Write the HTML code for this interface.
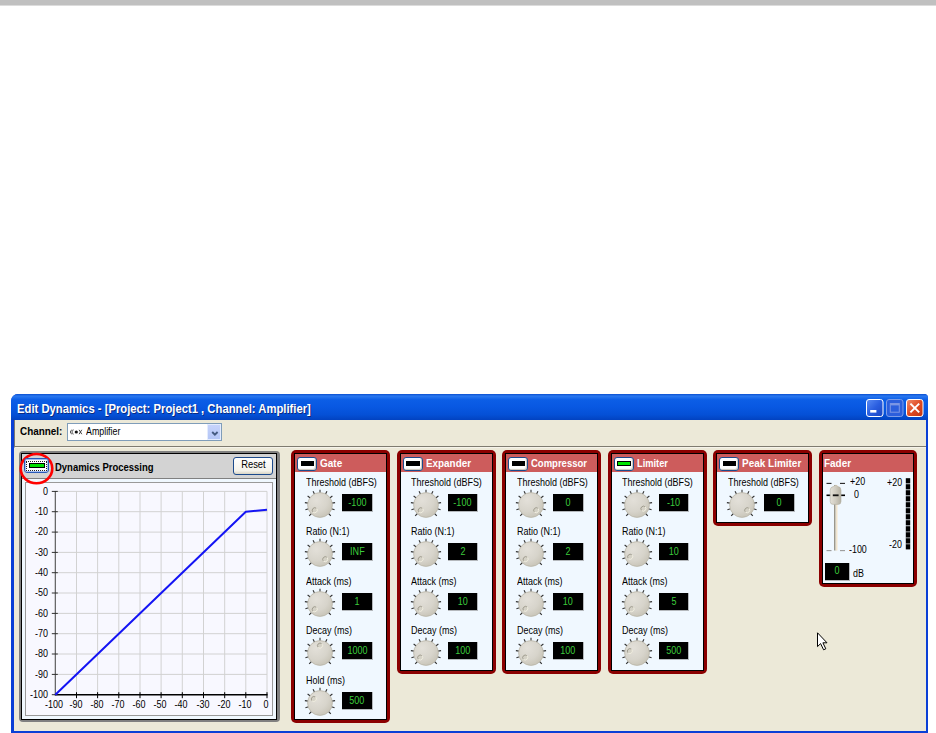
<!DOCTYPE html>
<html><head><meta charset="utf-8"><title>Edit Dynamics</title>
<style>
html,body{margin:0;padding:0;background:#fff;}
body{width:936px;height:733px;position:relative;overflow:hidden;font-family:"Liberation Sans",sans-serif;font-size:9.6px;color:#000;}
div,svg,span,i,b{position:absolute;box-sizing:border-box;}
.topbar{left:0;top:0;width:936px;height:6px;background:#c0c0c0;border-bottom:1px solid #dcdcdc}
.win{left:11px;top:394px;width:917px;height:340px;background:#0a3fd6;border-radius:7px 4px 0 0;}
.tb{left:0;top:0;width:917px;height:26px;border-radius:7px 4px 0 0;background:linear-gradient(#0a4fd0 0%,#2a78f0 8%,#0c5ee6 22%,#0858e2 50%,#0450d6 80%,#0242c0 100%);}
.tt{left:5.6px;top:8.6px;color:#fff;font-weight:bold;font-size:12px;line-height:13px;white-space:nowrap;transform:scaleX(0.939);transform-origin:0 0;text-shadow:1px 1px 0 #0a2a80}
.cl{left:3px;top:26px;width:912px;height:311px;background:#ece9d8;}
.tool{left:0;top:0;width:912px;height:28px;border-bottom:1px solid #f5f3ea;border-left:1px solid #777}
.tool u{position:absolute;left:0;right:0;bottom:0;height:1px;background:#7e7b70}
.chl{left:4.5px;top:4.5px;font-weight:bold;white-space:nowrap;font-size:11.2px;line-height:12px;transform:scaleX(0.886);transform-origin:0 0}
.cb{left:52px;top:3px;width:154.6px;height:17.5px;background:#fff;border:1px solid #7f9db9}
.cbb{right:0;top:0;width:13.5px;height:15.5px;background:linear-gradient(#c6d3fb,#b4c6f6);border:1px solid #e4ecfe}
.cbt{left:18px;top:1.5px;white-space:nowrap;font-size:10.3px;transform:scaleX(0.859);transform-origin:0 0;line-height:12px}
.lb{white-space:nowrap;font-size:10.3px;line-height:12px;transform:scaleX(0.872);transform-origin:0 0}
.vb{width:30.6px;height:18px;background:#000;color:#3ccc3c;text-align:center;font-size:10.4px;line-height:17px;border-right:1px solid #b4b8bc;border-bottom:1px solid #b4b8bc}
.vb span{position:static;display:inline-block;transform:scaleX(0.87);transform-origin:50% 50%}
.pn{background:#8b0000;border-radius:5px;}
.pi{left:3px;top:2.8px;right:3px;bottom:3px;background:#f0f8ff;border:1px solid #000}
.ph{left:0;top:0;right:0;height:18.3px;background:#cd5c5c}
.pt{color:#fff;font-weight:bold;white-space:nowrap;font-size:10.3px;line-height:12px;transform:scaleX(0.955);transform-origin:0 0}
.led{width:20px;height:13.5px;background:#fff;border:1px solid #1c4a8c;border-radius:3px;box-shadow:inset -1px -1px 1px #c8c4b8}
.led i{left:2.5px;top:2.8px;width:13.7px;height:5.6px;border:0.7px solid #000}
.led.big{width:25.7px;height:15px;border-color:#2858b8;box-shadow:inset 0 0 0 1px #a8c0f0}
.led.big b{left:1.5px;top:1.5px;right:1.5px;bottom:1.5px;border:1px dotted #222}
.led.big i{left:3.8px;top:4.2px;width:16.6px;height:5px}
.kn,.plot,.ring{overflow:visible}
.dp{left:19px;top:450.7px;width:260.6px;height:271.8px;background:#808080;border-radius:4px}
.dpi{left:1.8px;top:2.3px;right:2.8px;bottom:2.7px;border:1px solid #000;background:#f0f8ff}
.dph{left:0;top:0;right:0;height:25px;background:#d3d3d3;border-bottom:1px solid #808080}
.dpc{left:3.7px;top:28px;right:2.6px;bottom:2.7px;border:1px solid #9a9a9a;background:#f8f8ff}
.dpt{font-weight:bold;font-size:10.5px;line-height:12px;transform:scaleX(0.903);transform-origin:0 0;white-space:nowrap}
.btn{width:40px;height:17.5px;border:1px solid #1c4a8c;border-radius:3px;background:linear-gradient(#fff,#f4f2ea 80%,#d8d4c4);text-align:center;line-height:14.5px;font-size:10.3px}
.btn span{position:static;display:inline-block;transform:scaleX(0.91);transform-origin:50% 50%;margin-left:1.4px}
.ax{font-size:10.3px;line-height:12px;white-space:nowrap}
.yl{text-align:right;transform:scaleX(0.87);transform-origin:100% 50%}
.xl{text-align:center;transform:scaleX(0.87);transform-origin:50% 50%}
.fl{font-size:10px;line-height:12px;white-space:nowrap;transform:scaleX(0.89);transform-origin:0 0}
</style></head><body>
<svg width="0" height="0" style="left:0;top:0"><defs>
<radialGradient id="kg" cx="0.35" cy="0.3" r="0.85"><stop offset="0" stop-color="#e3e0d9"/><stop offset="0.55" stop-color="#d7d4cb"/><stop offset="1" stop-color="#c2beb0"/></radialGradient>
<radialGradient id="dg" cx="0.7" cy="0.7" r="0.8"><stop offset="0" stop-color="#e8e6de"/><stop offset="1" stop-color="#c4c0b4"/></radialGradient>
<linearGradient id="tg" x1="0" y1="0" x2="1" y2="0"><stop offset="0" stop-color="#e4e1d8"/><stop offset="0.5" stop-color="#d0ccc0"/><stop offset="1" stop-color="#b4b0a2"/></linearGradient>
</defs></svg>
<div class="topbar"></div>
<div class="win">
<div class="tb"><div class="tt">Edit Dynamics - [Project: Project1 , Channel: Amplifier]</div>
<svg class="plot" style="left:855px;top:5px" width="60" height="18" viewBox="0 0 60 18">
<defs><linearGradient id="bb" x1="0" y1="0" x2="1" y2="1"><stop offset="0" stop-color="#5a8cf4"/><stop offset="0.5" stop-color="#2a5ee0"/><stop offset="1" stop-color="#1a44c0"/></linearGradient>
<linearGradient id="br" x1="0" y1="0" x2="1" y2="1"><stop offset="0" stop-color="#f09070"/><stop offset="0.5" stop-color="#e04c24"/><stop offset="1" stop-color="#c03410"/></linearGradient></defs>
<rect x="0.5" y="0.5" width="16.5" height="17" rx="2.5" fill="url(#bb)" stroke="#fff" stroke-width="1"/>
<rect x="4.2" y="11" width="6.2" height="2.6" fill="#fff"/>
<rect x="20.5" y="0.5" width="16.5" height="17" rx="2.5" fill="#2c5edc" stroke="#7c9ce8" stroke-width="1"/>
<rect x="24.3" y="4.6" width="9" height="8.6" fill="none" stroke="#7c96e4" stroke-width="1"/><rect x="24.3" y="4.2" width="9" height="2.2" fill="#7c96e4"/>
<rect x="40.5" y="0.5" width="16.5" height="17" rx="2.5" fill="url(#br)" stroke="#fff" stroke-width="1"/>
<path d="M44.4 4.6 L53.2 13.4 M53.2 4.6 L44.4 13.4" stroke="#fff" stroke-width="2" fill="none"/>
</svg>
</div>
<div class="cl"><div class="tool"><u></u><div class="chl">Channel:</div><div class="cb"><svg class="plot" style="left:1.6px;top:4px" width="14" height="8" viewBox="0 0 14 8"><circle cx="6.3" cy="4" r="1.6" fill="#111"/><path d="M3.4 1.6 L1.8 4 L3.4 6.4 M1.8 1.6 L0.2 4 L1.8 6.4" stroke="#444" stroke-width="0.9" fill="none"/><path d="M9.1 1.8 L11.8 6.2 M11.8 1.8 L9.1 6.2" stroke="#333" stroke-width="0.9" fill="none"/></svg><div class="cbt">Amplifier</div><div class="cbb"><svg class="plot" style="left:2.6px;top:5.8px" width="8" height="6" viewBox="0 0 8 6"><path d="M1.2 1 L3.9 3.6 L6.6 1" stroke="#445a80" stroke-width="1.9" fill="none"/></svg></div></div></div></div>
</div>
<div class="dp"><div class="dpi"><div class="dph"></div><div class="dpc"><div class="dpp"></div></div></div></div><svg class="ring" style="left:17px;top:450.5px" width="40" height="36"><ellipse cx="19.5" cy="17.6" rx="15.8" ry="14.6" fill="none" stroke="#f00" stroke-width="2.6"/></svg><div class="led big" style="left:23.8px;top:458.1px"><b></b><i style="background:#00e000"></i></div><div class="dpt" style="left:55px;top:460.5px">Dynamics Processing</div><div class="btn" style="left:233px;top:457px"><span>Reset</span></div><svg class="plot" style="left:0;top:0" width="936" height="733"><line x1="76.5" y1="491.4" x2="76.5" y2="694.7" stroke="#d2d2d2" stroke-width="1"/><line x1="97.6" y1="491.4" x2="97.6" y2="694.7" stroke="#d2d2d2" stroke-width="1"/><line x1="118.8" y1="491.4" x2="118.8" y2="694.7" stroke="#d2d2d2" stroke-width="1"/><line x1="140.0" y1="491.4" x2="140.0" y2="694.7" stroke="#d2d2d2" stroke-width="1"/><line x1="161.1" y1="491.4" x2="161.1" y2="694.7" stroke="#d2d2d2" stroke-width="1"/><line x1="182.3" y1="491.4" x2="182.3" y2="694.7" stroke="#d2d2d2" stroke-width="1"/><line x1="203.5" y1="491.4" x2="203.5" y2="694.7" stroke="#d2d2d2" stroke-width="1"/><line x1="224.7" y1="491.4" x2="224.7" y2="694.7" stroke="#d2d2d2" stroke-width="1"/><line x1="245.8" y1="491.4" x2="245.8" y2="694.7" stroke="#d2d2d2" stroke-width="1"/><line x1="267.0" y1="491.4" x2="267.0" y2="694.7" stroke="#d2d2d2" stroke-width="1"/><line x1="55.3" y1="491.4" x2="267.0" y2="491.4" stroke="#d2d2d2" stroke-width="1"/><line x1="55.3" y1="511.7" x2="267.0" y2="511.7" stroke="#d2d2d2" stroke-width="1"/><line x1="55.3" y1="532.1" x2="267.0" y2="532.1" stroke="#d2d2d2" stroke-width="1"/><line x1="55.3" y1="552.4" x2="267.0" y2="552.4" stroke="#d2d2d2" stroke-width="1"/><line x1="55.3" y1="572.7" x2="267.0" y2="572.7" stroke="#d2d2d2" stroke-width="1"/><line x1="55.3" y1="593.0" x2="267.0" y2="593.0" stroke="#d2d2d2" stroke-width="1"/><line x1="55.3" y1="613.4" x2="267.0" y2="613.4" stroke="#d2d2d2" stroke-width="1"/><line x1="55.3" y1="633.7" x2="267.0" y2="633.7" stroke="#d2d2d2" stroke-width="1"/><line x1="55.3" y1="654.0" x2="267.0" y2="654.0" stroke="#d2d2d2" stroke-width="1"/><line x1="55.3" y1="674.4" x2="267.0" y2="674.4" stroke="#d2d2d2" stroke-width="1"/><line x1="55.3" y1="490.9" x2="55.3" y2="695.2" stroke="#505050" stroke-width="1.1"/><line x1="54.8" y1="694.7" x2="267.5" y2="694.7" stroke="#000" stroke-width="1.4"/><line x1="51.8" y1="491.4" x2="57.8" y2="491.4" stroke="#303030" stroke-width="1"/><line x1="51.8" y1="511.7" x2="57.8" y2="511.7" stroke="#303030" stroke-width="1"/><line x1="51.8" y1="532.1" x2="57.8" y2="532.1" stroke="#303030" stroke-width="1"/><line x1="51.8" y1="552.4" x2="57.8" y2="552.4" stroke="#303030" stroke-width="1"/><line x1="51.8" y1="572.7" x2="57.8" y2="572.7" stroke="#303030" stroke-width="1"/><line x1="51.8" y1="593.0" x2="57.8" y2="593.0" stroke="#303030" stroke-width="1"/><line x1="51.8" y1="613.4" x2="57.8" y2="613.4" stroke="#303030" stroke-width="1"/><line x1="51.8" y1="633.7" x2="57.8" y2="633.7" stroke="#303030" stroke-width="1"/><line x1="51.8" y1="654.0" x2="57.8" y2="654.0" stroke="#303030" stroke-width="1"/><line x1="51.8" y1="674.4" x2="57.8" y2="674.4" stroke="#303030" stroke-width="1"/><line x1="51.8" y1="694.7" x2="57.8" y2="694.7" stroke="#303030" stroke-width="1"/><line x1="76.5" y1="692.2" x2="76.5" y2="698.2" stroke="#000" stroke-width="1"/><line x1="97.6" y1="692.2" x2="97.6" y2="698.2" stroke="#000" stroke-width="1"/><line x1="118.8" y1="692.2" x2="118.8" y2="698.2" stroke="#000" stroke-width="1"/><line x1="140.0" y1="692.2" x2="140.0" y2="698.2" stroke="#000" stroke-width="1"/><line x1="161.1" y1="692.2" x2="161.1" y2="698.2" stroke="#000" stroke-width="1"/><line x1="182.3" y1="692.2" x2="182.3" y2="698.2" stroke="#000" stroke-width="1"/><line x1="203.5" y1="692.2" x2="203.5" y2="698.2" stroke="#000" stroke-width="1"/><line x1="224.7" y1="692.2" x2="224.7" y2="698.2" stroke="#000" stroke-width="1"/><line x1="245.8" y1="692.2" x2="245.8" y2="698.2" stroke="#000" stroke-width="1"/><line x1="267.0" y1="692.2" x2="267.0" y2="698.2" stroke="#000" stroke-width="1"/><polyline points="55.3,694.7 245.8,511.7 267.0,509.7" fill="none" stroke="#1414f4" stroke-width="2" stroke-linejoin="round"/></svg><div class="ax yl" style="left:18px;top:485.6px;width:30px">0</div><div class="ax yl" style="left:18px;top:505.9px;width:30px">-10</div><div class="ax yl" style="left:18px;top:526.3px;width:30px">-20</div><div class="ax yl" style="left:18px;top:546.6px;width:30px">-30</div><div class="ax yl" style="left:18px;top:566.9px;width:30px">-40</div><div class="ax yl" style="left:18px;top:587.2px;width:30px">-50</div><div class="ax yl" style="left:18px;top:607.6px;width:30px">-60</div><div class="ax yl" style="left:18px;top:627.9px;width:30px">-70</div><div class="ax yl" style="left:18px;top:648.2px;width:30px">-80</div><div class="ax yl" style="left:18px;top:668.6px;width:30px">-90</div><div class="ax yl" style="left:18px;top:688.9px;width:30px">-100</div><div class="ax xl" style="left:39.3px;top:698.9px;width:30px">-100</div><div class="ax xl" style="left:60.5px;top:698.9px;width:30px">-90</div><div class="ax xl" style="left:81.6px;top:698.9px;width:30px">-80</div><div class="ax xl" style="left:102.8px;top:698.9px;width:30px">-70</div><div class="ax xl" style="left:124.0px;top:698.9px;width:30px">-60</div><div class="ax xl" style="left:145.1px;top:698.9px;width:30px">-50</div><div class="ax xl" style="left:166.3px;top:698.9px;width:30px">-40</div><div class="ax xl" style="left:187.5px;top:698.9px;width:30px">-30</div><div class="ax xl" style="left:208.7px;top:698.9px;width:30px">-20</div><div class="ax xl" style="left:229.8px;top:698.9px;width:30px">-10</div><div class="ax xl" style="left:251.0px;top:698.9px;width:30px">0</div><div class="pn" style="left:291.0px;top:450.4px;width:99.2px;height:272.9px"><div class="pi"><div class="ph"></div></div></div><div class="led" style="left:297.0px;top:457.0px"><i style="background:#000"></i></div><div class="pt" style="left:320.2px;top:457.5px;transform:scaleX(0.969)">Gate</div><div class="lb" style="left:305.7px;top:476.7px">Threshold (dBFS)</div><svg class="kn" style="left:302.3px;top:486.5px" width="36" height="36" viewBox="-18 -18 36 36"><line x1="-8.49" y1="8.49" x2="-10.82" y2="10.82" stroke="#333" stroke-width="1.1"/><line x1="-11.41" y1="3.71" x2="-14.55" y2="4.73" stroke="#333" stroke-width="1.1"/><line x1="-11.85" y1="-1.88" x2="-15.11" y2="-2.39" stroke="#333" stroke-width="1.1"/><line x1="-9.71" y1="-7.05" x2="-12.38" y2="-8.99" stroke="#333" stroke-width="1.1"/><line x1="-5.45" y1="-10.69" x2="-6.95" y2="-13.63" stroke="#333" stroke-width="1.1"/><line x1="0.00" y1="-12.00" x2="0.00" y2="-15.30" stroke="#333" stroke-width="1.1"/><line x1="5.45" y1="-10.69" x2="6.95" y2="-13.63" stroke="#333" stroke-width="1.1"/><line x1="9.71" y1="-7.05" x2="12.38" y2="-8.99" stroke="#333" stroke-width="1.1"/><line x1="11.85" y1="-1.88" x2="15.11" y2="-2.39" stroke="#333" stroke-width="1.1"/><line x1="11.41" y1="3.71" x2="14.55" y2="4.73" stroke="#333" stroke-width="1.1"/><line x1="8.49" y1="8.49" x2="10.82" y2="10.82" stroke="#333" stroke-width="1.1"/><circle r="12.4" fill="url(#kg)" stroke="#b4b0a2" stroke-width="0.7"/><circle cx="-5.23" cy="5.23" r="2.5" fill="#d4d1c6"/><path d="M-7.00 7.00 A2.5 2.5 0 0 1 -3.46 3.46" fill="none" stroke="#9a9688" stroke-width="0.9"/><path d="M-3.46 3.46 A2.5 2.5 0 0 1 -7.00 7.00" fill="none" stroke="#f3f0e2" stroke-width="0.9"/></svg><div class="vb" style="left:342.3px;top:493.6px"><span>-100</span></div><div class="lb" style="left:305.7px;top:526.2px">Ratio (N:1)</div><svg class="kn" style="left:302.3px;top:536.0px" width="36" height="36" viewBox="-18 -18 36 36"><line x1="-8.49" y1="8.49" x2="-10.82" y2="10.82" stroke="#333" stroke-width="1.1"/><line x1="-11.41" y1="3.71" x2="-14.55" y2="4.73" stroke="#333" stroke-width="1.1"/><line x1="-11.85" y1="-1.88" x2="-15.11" y2="-2.39" stroke="#333" stroke-width="1.1"/><line x1="-9.71" y1="-7.05" x2="-12.38" y2="-8.99" stroke="#333" stroke-width="1.1"/><line x1="-5.45" y1="-10.69" x2="-6.95" y2="-13.63" stroke="#333" stroke-width="1.1"/><line x1="0.00" y1="-12.00" x2="0.00" y2="-15.30" stroke="#333" stroke-width="1.1"/><line x1="5.45" y1="-10.69" x2="6.95" y2="-13.63" stroke="#333" stroke-width="1.1"/><line x1="9.71" y1="-7.05" x2="12.38" y2="-8.99" stroke="#333" stroke-width="1.1"/><line x1="11.85" y1="-1.88" x2="15.11" y2="-2.39" stroke="#333" stroke-width="1.1"/><line x1="11.41" y1="3.71" x2="14.55" y2="4.73" stroke="#333" stroke-width="1.1"/><line x1="8.49" y1="8.49" x2="10.82" y2="10.82" stroke="#333" stroke-width="1.1"/><circle r="12.4" fill="url(#kg)" stroke="#b4b0a2" stroke-width="0.7"/><circle cx="5.23" cy="5.23" r="2.5" fill="#d4d1c6"/><path d="M3.46 7.00 A2.5 2.5 0 0 1 7.00 3.46" fill="none" stroke="#9a9688" stroke-width="0.9"/><path d="M7.00 3.46 A2.5 2.5 0 0 1 3.46 7.00" fill="none" stroke="#f3f0e2" stroke-width="0.9"/></svg><div class="vb" style="left:342.3px;top:543.1px"><span>INF</span></div><div class="lb" style="left:305.7px;top:575.7px">Attack (ms)</div><svg class="kn" style="left:302.3px;top:585.5px" width="36" height="36" viewBox="-18 -18 36 36"><line x1="-8.49" y1="8.49" x2="-10.82" y2="10.82" stroke="#333" stroke-width="1.1"/><line x1="-11.41" y1="3.71" x2="-14.55" y2="4.73" stroke="#333" stroke-width="1.1"/><line x1="-11.85" y1="-1.88" x2="-15.11" y2="-2.39" stroke="#333" stroke-width="1.1"/><line x1="-9.71" y1="-7.05" x2="-12.38" y2="-8.99" stroke="#333" stroke-width="1.1"/><line x1="-5.45" y1="-10.69" x2="-6.95" y2="-13.63" stroke="#333" stroke-width="1.1"/><line x1="0.00" y1="-12.00" x2="0.00" y2="-15.30" stroke="#333" stroke-width="1.1"/><line x1="5.45" y1="-10.69" x2="6.95" y2="-13.63" stroke="#333" stroke-width="1.1"/><line x1="9.71" y1="-7.05" x2="12.38" y2="-8.99" stroke="#333" stroke-width="1.1"/><line x1="11.85" y1="-1.88" x2="15.11" y2="-2.39" stroke="#333" stroke-width="1.1"/><line x1="11.41" y1="3.71" x2="14.55" y2="4.73" stroke="#333" stroke-width="1.1"/><line x1="8.49" y1="8.49" x2="10.82" y2="10.82" stroke="#333" stroke-width="1.1"/><circle r="12.4" fill="url(#kg)" stroke="#b4b0a2" stroke-width="0.7"/><circle cx="-5.23" cy="5.23" r="2.5" fill="#d4d1c6"/><path d="M-7.00 7.00 A2.5 2.5 0 0 1 -3.46 3.46" fill="none" stroke="#9a9688" stroke-width="0.9"/><path d="M-3.46 3.46 A2.5 2.5 0 0 1 -7.00 7.00" fill="none" stroke="#f3f0e2" stroke-width="0.9"/></svg><div class="vb" style="left:342.3px;top:592.6px"><span>1</span></div><div class="lb" style="left:305.7px;top:625.2px">Decay (ms)</div><svg class="kn" style="left:302.3px;top:635.0px" width="36" height="36" viewBox="-18 -18 36 36"><line x1="-8.49" y1="8.49" x2="-10.82" y2="10.82" stroke="#333" stroke-width="1.1"/><line x1="-11.41" y1="3.71" x2="-14.55" y2="4.73" stroke="#333" stroke-width="1.1"/><line x1="-11.85" y1="-1.88" x2="-15.11" y2="-2.39" stroke="#333" stroke-width="1.1"/><line x1="-9.71" y1="-7.05" x2="-12.38" y2="-8.99" stroke="#333" stroke-width="1.1"/><line x1="-5.45" y1="-10.69" x2="-6.95" y2="-13.63" stroke="#333" stroke-width="1.1"/><line x1="0.00" y1="-12.00" x2="0.00" y2="-15.30" stroke="#333" stroke-width="1.1"/><line x1="5.45" y1="-10.69" x2="6.95" y2="-13.63" stroke="#333" stroke-width="1.1"/><line x1="9.71" y1="-7.05" x2="12.38" y2="-8.99" stroke="#333" stroke-width="1.1"/><line x1="11.85" y1="-1.88" x2="15.11" y2="-2.39" stroke="#333" stroke-width="1.1"/><line x1="11.41" y1="3.71" x2="14.55" y2="4.73" stroke="#333" stroke-width="1.1"/><line x1="8.49" y1="8.49" x2="10.82" y2="10.82" stroke="#333" stroke-width="1.1"/><circle r="12.4" fill="url(#kg)" stroke="#b4b0a2" stroke-width="0.7"/><circle cx="0.00" cy="-7.40" r="2.5" fill="#d4d1c6"/><path d="M-1.77 -5.63 A2.5 2.5 0 0 1 1.77 -9.17" fill="none" stroke="#9a9688" stroke-width="0.9"/><path d="M1.77 -9.17 A2.5 2.5 0 0 1 -1.77 -5.63" fill="none" stroke="#f3f0e2" stroke-width="0.9"/></svg><div class="vb" style="left:342.3px;top:642.1px"><span>1000</span></div><div class="lb" style="left:305.7px;top:674.7px">Hold (ms)</div><svg class="kn" style="left:302.3px;top:684.5px" width="36" height="36" viewBox="-18 -18 36 36"><line x1="-8.49" y1="8.49" x2="-10.82" y2="10.82" stroke="#333" stroke-width="1.1"/><line x1="-11.41" y1="3.71" x2="-14.55" y2="4.73" stroke="#333" stroke-width="1.1"/><line x1="-11.85" y1="-1.88" x2="-15.11" y2="-2.39" stroke="#333" stroke-width="1.1"/><line x1="-9.71" y1="-7.05" x2="-12.38" y2="-8.99" stroke="#333" stroke-width="1.1"/><line x1="-5.45" y1="-10.69" x2="-6.95" y2="-13.63" stroke="#333" stroke-width="1.1"/><line x1="0.00" y1="-12.00" x2="0.00" y2="-15.30" stroke="#333" stroke-width="1.1"/><line x1="5.45" y1="-10.69" x2="6.95" y2="-13.63" stroke="#333" stroke-width="1.1"/><line x1="9.71" y1="-7.05" x2="12.38" y2="-8.99" stroke="#333" stroke-width="1.1"/><line x1="11.85" y1="-1.88" x2="15.11" y2="-2.39" stroke="#333" stroke-width="1.1"/><line x1="11.41" y1="3.71" x2="14.55" y2="4.73" stroke="#333" stroke-width="1.1"/><line x1="8.49" y1="8.49" x2="10.82" y2="10.82" stroke="#333" stroke-width="1.1"/><circle r="12.4" fill="url(#kg)" stroke="#b4b0a2" stroke-width="0.7"/><circle cx="-6.21" cy="-4.03" r="2.5" fill="#d4d1c6"/><path d="M-7.97 -2.26 A2.5 2.5 0 0 1 -4.44 -5.80" fill="none" stroke="#9a9688" stroke-width="0.9"/><path d="M-4.44 -5.80 A2.5 2.5 0 0 1 -7.97 -2.26" fill="none" stroke="#f3f0e2" stroke-width="0.9"/></svg><div class="vb" style="left:342.3px;top:691.6px"><span>500</span></div><div class="pn" style="left:396.5px;top:450.4px;width:99.2px;height:223.8px"><div class="pi"><div class="ph"></div></div></div><div class="led" style="left:402.5px;top:457.0px"><i style="background:#000"></i></div><div class="pt" style="left:425.7px;top:457.5px;transform:scaleX(0.959)">Expander</div><div class="lb" style="left:411.2px;top:476.7px">Threshold (dBFS)</div><svg class="kn" style="left:407.8px;top:486.5px" width="36" height="36" viewBox="-18 -18 36 36"><line x1="-8.49" y1="8.49" x2="-10.82" y2="10.82" stroke="#333" stroke-width="1.1"/><line x1="-11.41" y1="3.71" x2="-14.55" y2="4.73" stroke="#333" stroke-width="1.1"/><line x1="-11.85" y1="-1.88" x2="-15.11" y2="-2.39" stroke="#333" stroke-width="1.1"/><line x1="-9.71" y1="-7.05" x2="-12.38" y2="-8.99" stroke="#333" stroke-width="1.1"/><line x1="-5.45" y1="-10.69" x2="-6.95" y2="-13.63" stroke="#333" stroke-width="1.1"/><line x1="0.00" y1="-12.00" x2="0.00" y2="-15.30" stroke="#333" stroke-width="1.1"/><line x1="5.45" y1="-10.69" x2="6.95" y2="-13.63" stroke="#333" stroke-width="1.1"/><line x1="9.71" y1="-7.05" x2="12.38" y2="-8.99" stroke="#333" stroke-width="1.1"/><line x1="11.85" y1="-1.88" x2="15.11" y2="-2.39" stroke="#333" stroke-width="1.1"/><line x1="11.41" y1="3.71" x2="14.55" y2="4.73" stroke="#333" stroke-width="1.1"/><line x1="8.49" y1="8.49" x2="10.82" y2="10.82" stroke="#333" stroke-width="1.1"/><circle r="12.4" fill="url(#kg)" stroke="#b4b0a2" stroke-width="0.7"/><circle cx="-5.23" cy="5.23" r="2.5" fill="#d4d1c6"/><path d="M-7.00 7.00 A2.5 2.5 0 0 1 -3.46 3.46" fill="none" stroke="#9a9688" stroke-width="0.9"/><path d="M-3.46 3.46 A2.5 2.5 0 0 1 -7.00 7.00" fill="none" stroke="#f3f0e2" stroke-width="0.9"/></svg><div class="vb" style="left:447.8px;top:493.6px"><span>-100</span></div><div class="lb" style="left:411.2px;top:526.2px">Ratio (N:1)</div><svg class="kn" style="left:407.8px;top:536.0px" width="36" height="36" viewBox="-18 -18 36 36"><line x1="-8.49" y1="8.49" x2="-10.82" y2="10.82" stroke="#333" stroke-width="1.1"/><line x1="-11.41" y1="3.71" x2="-14.55" y2="4.73" stroke="#333" stroke-width="1.1"/><line x1="-11.85" y1="-1.88" x2="-15.11" y2="-2.39" stroke="#333" stroke-width="1.1"/><line x1="-9.71" y1="-7.05" x2="-12.38" y2="-8.99" stroke="#333" stroke-width="1.1"/><line x1="-5.45" y1="-10.69" x2="-6.95" y2="-13.63" stroke="#333" stroke-width="1.1"/><line x1="0.00" y1="-12.00" x2="0.00" y2="-15.30" stroke="#333" stroke-width="1.1"/><line x1="5.45" y1="-10.69" x2="6.95" y2="-13.63" stroke="#333" stroke-width="1.1"/><line x1="9.71" y1="-7.05" x2="12.38" y2="-8.99" stroke="#333" stroke-width="1.1"/><line x1="11.85" y1="-1.88" x2="15.11" y2="-2.39" stroke="#333" stroke-width="1.1"/><line x1="11.41" y1="3.71" x2="14.55" y2="4.73" stroke="#333" stroke-width="1.1"/><line x1="8.49" y1="8.49" x2="10.82" y2="10.82" stroke="#333" stroke-width="1.1"/><circle r="12.4" fill="url(#kg)" stroke="#b4b0a2" stroke-width="0.7"/><circle cx="-5.32" cy="5.14" r="2.5" fill="#d4d1c6"/><path d="M-7.09 6.91 A2.5 2.5 0 0 1 -3.56 3.37" fill="none" stroke="#9a9688" stroke-width="0.9"/><path d="M-3.56 3.37 A2.5 2.5 0 0 1 -7.09 6.91" fill="none" stroke="#f3f0e2" stroke-width="0.9"/></svg><div class="vb" style="left:447.8px;top:543.1px"><span>2</span></div><div class="lb" style="left:411.2px;top:575.7px">Attack (ms)</div><svg class="kn" style="left:407.8px;top:585.5px" width="36" height="36" viewBox="-18 -18 36 36"><line x1="-8.49" y1="8.49" x2="-10.82" y2="10.82" stroke="#333" stroke-width="1.1"/><line x1="-11.41" y1="3.71" x2="-14.55" y2="4.73" stroke="#333" stroke-width="1.1"/><line x1="-11.85" y1="-1.88" x2="-15.11" y2="-2.39" stroke="#333" stroke-width="1.1"/><line x1="-9.71" y1="-7.05" x2="-12.38" y2="-8.99" stroke="#333" stroke-width="1.1"/><line x1="-5.45" y1="-10.69" x2="-6.95" y2="-13.63" stroke="#333" stroke-width="1.1"/><line x1="0.00" y1="-12.00" x2="0.00" y2="-15.30" stroke="#333" stroke-width="1.1"/><line x1="5.45" y1="-10.69" x2="6.95" y2="-13.63" stroke="#333" stroke-width="1.1"/><line x1="9.71" y1="-7.05" x2="12.38" y2="-8.99" stroke="#333" stroke-width="1.1"/><line x1="11.85" y1="-1.88" x2="15.11" y2="-2.39" stroke="#333" stroke-width="1.1"/><line x1="11.41" y1="3.71" x2="14.55" y2="4.73" stroke="#333" stroke-width="1.1"/><line x1="8.49" y1="8.49" x2="10.82" y2="10.82" stroke="#333" stroke-width="1.1"/><circle r="12.4" fill="url(#kg)" stroke="#b4b0a2" stroke-width="0.7"/><circle cx="-5.58" cy="4.85" r="2.5" fill="#d4d1c6"/><path d="M-7.35 6.62 A2.5 2.5 0 0 1 -3.82 3.09" fill="none" stroke="#9a9688" stroke-width="0.9"/><path d="M-3.82 3.09 A2.5 2.5 0 0 1 -7.35 6.62" fill="none" stroke="#f3f0e2" stroke-width="0.9"/></svg><div class="vb" style="left:447.8px;top:592.6px"><span>10</span></div><div class="lb" style="left:411.2px;top:625.2px">Decay (ms)</div><svg class="kn" style="left:407.8px;top:635.0px" width="36" height="36" viewBox="-18 -18 36 36"><line x1="-8.49" y1="8.49" x2="-10.82" y2="10.82" stroke="#333" stroke-width="1.1"/><line x1="-11.41" y1="3.71" x2="-14.55" y2="4.73" stroke="#333" stroke-width="1.1"/><line x1="-11.85" y1="-1.88" x2="-15.11" y2="-2.39" stroke="#333" stroke-width="1.1"/><line x1="-9.71" y1="-7.05" x2="-12.38" y2="-8.99" stroke="#333" stroke-width="1.1"/><line x1="-5.45" y1="-10.69" x2="-6.95" y2="-13.63" stroke="#333" stroke-width="1.1"/><line x1="0.00" y1="-12.00" x2="0.00" y2="-15.30" stroke="#333" stroke-width="1.1"/><line x1="5.45" y1="-10.69" x2="6.95" y2="-13.63" stroke="#333" stroke-width="1.1"/><line x1="9.71" y1="-7.05" x2="12.38" y2="-8.99" stroke="#333" stroke-width="1.1"/><line x1="11.85" y1="-1.88" x2="15.11" y2="-2.39" stroke="#333" stroke-width="1.1"/><line x1="11.41" y1="3.71" x2="14.55" y2="4.73" stroke="#333" stroke-width="1.1"/><line x1="8.49" y1="8.49" x2="10.82" y2="10.82" stroke="#333" stroke-width="1.1"/><circle r="12.4" fill="url(#kg)" stroke="#b4b0a2" stroke-width="0.7"/><circle cx="-5.83" cy="4.56" r="2.5" fill="#d4d1c6"/><path d="M-7.60 6.32 A2.5 2.5 0 0 1 -4.06 2.79" fill="none" stroke="#9a9688" stroke-width="0.9"/><path d="M-4.06 2.79 A2.5 2.5 0 0 1 -7.60 6.32" fill="none" stroke="#f3f0e2" stroke-width="0.9"/></svg><div class="vb" style="left:447.8px;top:642.1px"><span>100</span></div><div class="pn" style="left:502.0px;top:450.4px;width:99.2px;height:223.8px"><div class="pi"><div class="ph"></div></div></div><div class="led" style="left:508.0px;top:457.0px"><i style="background:#000"></i></div><div class="pt" style="left:531.2px;top:457.5px;transform:scaleX(0.923)">Compressor</div><div class="lb" style="left:516.7px;top:476.7px">Threshold (dBFS)</div><svg class="kn" style="left:513.3px;top:486.5px" width="36" height="36" viewBox="-18 -18 36 36"><line x1="-8.49" y1="8.49" x2="-10.82" y2="10.82" stroke="#333" stroke-width="1.1"/><line x1="-11.41" y1="3.71" x2="-14.55" y2="4.73" stroke="#333" stroke-width="1.1"/><line x1="-11.85" y1="-1.88" x2="-15.11" y2="-2.39" stroke="#333" stroke-width="1.1"/><line x1="-9.71" y1="-7.05" x2="-12.38" y2="-8.99" stroke="#333" stroke-width="1.1"/><line x1="-5.45" y1="-10.69" x2="-6.95" y2="-13.63" stroke="#333" stroke-width="1.1"/><line x1="0.00" y1="-12.00" x2="0.00" y2="-15.30" stroke="#333" stroke-width="1.1"/><line x1="5.45" y1="-10.69" x2="6.95" y2="-13.63" stroke="#333" stroke-width="1.1"/><line x1="9.71" y1="-7.05" x2="12.38" y2="-8.99" stroke="#333" stroke-width="1.1"/><line x1="11.85" y1="-1.88" x2="15.11" y2="-2.39" stroke="#333" stroke-width="1.1"/><line x1="11.41" y1="3.71" x2="14.55" y2="4.73" stroke="#333" stroke-width="1.1"/><line x1="8.49" y1="8.49" x2="10.82" y2="10.82" stroke="#333" stroke-width="1.1"/><circle r="12.4" fill="url(#kg)" stroke="#b4b0a2" stroke-width="0.7"/><circle cx="5.23" cy="5.23" r="2.5" fill="#d4d1c6"/><path d="M3.46 7.00 A2.5 2.5 0 0 1 7.00 3.46" fill="none" stroke="#9a9688" stroke-width="0.9"/><path d="M7.00 3.46 A2.5 2.5 0 0 1 3.46 7.00" fill="none" stroke="#f3f0e2" stroke-width="0.9"/></svg><div class="vb" style="left:553.3px;top:493.6px"><span>0</span></div><div class="lb" style="left:516.7px;top:526.2px">Ratio (N:1)</div><svg class="kn" style="left:513.3px;top:536.0px" width="36" height="36" viewBox="-18 -18 36 36"><line x1="-8.49" y1="8.49" x2="-10.82" y2="10.82" stroke="#333" stroke-width="1.1"/><line x1="-11.41" y1="3.71" x2="-14.55" y2="4.73" stroke="#333" stroke-width="1.1"/><line x1="-11.85" y1="-1.88" x2="-15.11" y2="-2.39" stroke="#333" stroke-width="1.1"/><line x1="-9.71" y1="-7.05" x2="-12.38" y2="-8.99" stroke="#333" stroke-width="1.1"/><line x1="-5.45" y1="-10.69" x2="-6.95" y2="-13.63" stroke="#333" stroke-width="1.1"/><line x1="0.00" y1="-12.00" x2="0.00" y2="-15.30" stroke="#333" stroke-width="1.1"/><line x1="5.45" y1="-10.69" x2="6.95" y2="-13.63" stroke="#333" stroke-width="1.1"/><line x1="9.71" y1="-7.05" x2="12.38" y2="-8.99" stroke="#333" stroke-width="1.1"/><line x1="11.85" y1="-1.88" x2="15.11" y2="-2.39" stroke="#333" stroke-width="1.1"/><line x1="11.41" y1="3.71" x2="14.55" y2="4.73" stroke="#333" stroke-width="1.1"/><line x1="8.49" y1="8.49" x2="10.82" y2="10.82" stroke="#333" stroke-width="1.1"/><circle r="12.4" fill="url(#kg)" stroke="#b4b0a2" stroke-width="0.7"/><circle cx="-5.32" cy="5.14" r="2.5" fill="#d4d1c6"/><path d="M-7.09 6.91 A2.5 2.5 0 0 1 -3.56 3.37" fill="none" stroke="#9a9688" stroke-width="0.9"/><path d="M-3.56 3.37 A2.5 2.5 0 0 1 -7.09 6.91" fill="none" stroke="#f3f0e2" stroke-width="0.9"/></svg><div class="vb" style="left:553.3px;top:543.1px"><span>2</span></div><div class="lb" style="left:516.7px;top:575.7px">Attack (ms)</div><svg class="kn" style="left:513.3px;top:585.5px" width="36" height="36" viewBox="-18 -18 36 36"><line x1="-8.49" y1="8.49" x2="-10.82" y2="10.82" stroke="#333" stroke-width="1.1"/><line x1="-11.41" y1="3.71" x2="-14.55" y2="4.73" stroke="#333" stroke-width="1.1"/><line x1="-11.85" y1="-1.88" x2="-15.11" y2="-2.39" stroke="#333" stroke-width="1.1"/><line x1="-9.71" y1="-7.05" x2="-12.38" y2="-8.99" stroke="#333" stroke-width="1.1"/><line x1="-5.45" y1="-10.69" x2="-6.95" y2="-13.63" stroke="#333" stroke-width="1.1"/><line x1="0.00" y1="-12.00" x2="0.00" y2="-15.30" stroke="#333" stroke-width="1.1"/><line x1="5.45" y1="-10.69" x2="6.95" y2="-13.63" stroke="#333" stroke-width="1.1"/><line x1="9.71" y1="-7.05" x2="12.38" y2="-8.99" stroke="#333" stroke-width="1.1"/><line x1="11.85" y1="-1.88" x2="15.11" y2="-2.39" stroke="#333" stroke-width="1.1"/><line x1="11.41" y1="3.71" x2="14.55" y2="4.73" stroke="#333" stroke-width="1.1"/><line x1="8.49" y1="8.49" x2="10.82" y2="10.82" stroke="#333" stroke-width="1.1"/><circle r="12.4" fill="url(#kg)" stroke="#b4b0a2" stroke-width="0.7"/><circle cx="-5.58" cy="4.85" r="2.5" fill="#d4d1c6"/><path d="M-7.35 6.62 A2.5 2.5 0 0 1 -3.82 3.09" fill="none" stroke="#9a9688" stroke-width="0.9"/><path d="M-3.82 3.09 A2.5 2.5 0 0 1 -7.35 6.62" fill="none" stroke="#f3f0e2" stroke-width="0.9"/></svg><div class="vb" style="left:553.3px;top:592.6px"><span>10</span></div><div class="lb" style="left:516.7px;top:625.2px">Decay (ms)</div><svg class="kn" style="left:513.3px;top:635.0px" width="36" height="36" viewBox="-18 -18 36 36"><line x1="-8.49" y1="8.49" x2="-10.82" y2="10.82" stroke="#333" stroke-width="1.1"/><line x1="-11.41" y1="3.71" x2="-14.55" y2="4.73" stroke="#333" stroke-width="1.1"/><line x1="-11.85" y1="-1.88" x2="-15.11" y2="-2.39" stroke="#333" stroke-width="1.1"/><line x1="-9.71" y1="-7.05" x2="-12.38" y2="-8.99" stroke="#333" stroke-width="1.1"/><line x1="-5.45" y1="-10.69" x2="-6.95" y2="-13.63" stroke="#333" stroke-width="1.1"/><line x1="0.00" y1="-12.00" x2="0.00" y2="-15.30" stroke="#333" stroke-width="1.1"/><line x1="5.45" y1="-10.69" x2="6.95" y2="-13.63" stroke="#333" stroke-width="1.1"/><line x1="9.71" y1="-7.05" x2="12.38" y2="-8.99" stroke="#333" stroke-width="1.1"/><line x1="11.85" y1="-1.88" x2="15.11" y2="-2.39" stroke="#333" stroke-width="1.1"/><line x1="11.41" y1="3.71" x2="14.55" y2="4.73" stroke="#333" stroke-width="1.1"/><line x1="8.49" y1="8.49" x2="10.82" y2="10.82" stroke="#333" stroke-width="1.1"/><circle r="12.4" fill="url(#kg)" stroke="#b4b0a2" stroke-width="0.7"/><circle cx="-5.83" cy="4.56" r="2.5" fill="#d4d1c6"/><path d="M-7.60 6.32 A2.5 2.5 0 0 1 -4.06 2.79" fill="none" stroke="#9a9688" stroke-width="0.9"/><path d="M-4.06 2.79 A2.5 2.5 0 0 1 -7.60 6.32" fill="none" stroke="#f3f0e2" stroke-width="0.9"/></svg><div class="vb" style="left:553.3px;top:642.1px"><span>100</span></div><div class="pn" style="left:607.5px;top:450.4px;width:99.2px;height:223.8px"><div class="pi"><div class="ph"></div></div></div><div class="led" style="left:613.5px;top:457.0px"><i style="background:#00e400"></i></div><div class="pt" style="left:636.7px;top:457.5px;transform:scaleX(0.9)">Limiter</div><div class="lb" style="left:622.2px;top:476.7px">Threshold (dBFS)</div><svg class="kn" style="left:618.8px;top:486.5px" width="36" height="36" viewBox="-18 -18 36 36"><line x1="-8.49" y1="8.49" x2="-10.82" y2="10.82" stroke="#333" stroke-width="1.1"/><line x1="-11.41" y1="3.71" x2="-14.55" y2="4.73" stroke="#333" stroke-width="1.1"/><line x1="-11.85" y1="-1.88" x2="-15.11" y2="-2.39" stroke="#333" stroke-width="1.1"/><line x1="-9.71" y1="-7.05" x2="-12.38" y2="-8.99" stroke="#333" stroke-width="1.1"/><line x1="-5.45" y1="-10.69" x2="-6.95" y2="-13.63" stroke="#333" stroke-width="1.1"/><line x1="0.00" y1="-12.00" x2="0.00" y2="-15.30" stroke="#333" stroke-width="1.1"/><line x1="5.45" y1="-10.69" x2="6.95" y2="-13.63" stroke="#333" stroke-width="1.1"/><line x1="9.71" y1="-7.05" x2="12.38" y2="-8.99" stroke="#333" stroke-width="1.1"/><line x1="11.85" y1="-1.88" x2="15.11" y2="-2.39" stroke="#333" stroke-width="1.1"/><line x1="11.41" y1="3.71" x2="14.55" y2="4.73" stroke="#333" stroke-width="1.1"/><line x1="8.49" y1="8.49" x2="10.82" y2="10.82" stroke="#333" stroke-width="1.1"/><circle r="12.4" fill="url(#kg)" stroke="#b4b0a2" stroke-width="0.7"/><circle cx="6.41" cy="3.70" r="2.5" fill="#d4d1c6"/><path d="M4.64 5.47 A2.5 2.5 0 0 1 8.18 1.93" fill="none" stroke="#9a9688" stroke-width="0.9"/><path d="M8.18 1.93 A2.5 2.5 0 0 1 4.64 5.47" fill="none" stroke="#f3f0e2" stroke-width="0.9"/></svg><div class="vb" style="left:658.8px;top:493.6px"><span>-10</span></div><div class="lb" style="left:622.2px;top:526.2px">Ratio (N:1)</div><svg class="kn" style="left:618.8px;top:536.0px" width="36" height="36" viewBox="-18 -18 36 36"><line x1="-8.49" y1="8.49" x2="-10.82" y2="10.82" stroke="#333" stroke-width="1.1"/><line x1="-11.41" y1="3.71" x2="-14.55" y2="4.73" stroke="#333" stroke-width="1.1"/><line x1="-11.85" y1="-1.88" x2="-15.11" y2="-2.39" stroke="#333" stroke-width="1.1"/><line x1="-9.71" y1="-7.05" x2="-12.38" y2="-8.99" stroke="#333" stroke-width="1.1"/><line x1="-5.45" y1="-10.69" x2="-6.95" y2="-13.63" stroke="#333" stroke-width="1.1"/><line x1="0.00" y1="-12.00" x2="0.00" y2="-15.30" stroke="#333" stroke-width="1.1"/><line x1="5.45" y1="-10.69" x2="6.95" y2="-13.63" stroke="#333" stroke-width="1.1"/><line x1="9.71" y1="-7.05" x2="12.38" y2="-8.99" stroke="#333" stroke-width="1.1"/><line x1="11.85" y1="-1.88" x2="15.11" y2="-2.39" stroke="#333" stroke-width="1.1"/><line x1="11.41" y1="3.71" x2="14.55" y2="4.73" stroke="#333" stroke-width="1.1"/><line x1="8.49" y1="8.49" x2="10.82" y2="10.82" stroke="#333" stroke-width="1.1"/><circle r="12.4" fill="url(#kg)" stroke="#b4b0a2" stroke-width="0.7"/><circle cx="-6.86" cy="2.77" r="2.5" fill="#d4d1c6"/><path d="M-8.63 4.54 A2.5 2.5 0 0 1 -5.09 1.00" fill="none" stroke="#9a9688" stroke-width="0.9"/><path d="M-5.09 1.00 A2.5 2.5 0 0 1 -8.63 4.54" fill="none" stroke="#f3f0e2" stroke-width="0.9"/></svg><div class="vb" style="left:658.8px;top:543.1px"><span>10</span></div><div class="lb" style="left:622.2px;top:575.7px">Attack (ms)</div><svg class="kn" style="left:618.8px;top:585.5px" width="36" height="36" viewBox="-18 -18 36 36"><line x1="-8.49" y1="8.49" x2="-10.82" y2="10.82" stroke="#333" stroke-width="1.1"/><line x1="-11.41" y1="3.71" x2="-14.55" y2="4.73" stroke="#333" stroke-width="1.1"/><line x1="-11.85" y1="-1.88" x2="-15.11" y2="-2.39" stroke="#333" stroke-width="1.1"/><line x1="-9.71" y1="-7.05" x2="-12.38" y2="-8.99" stroke="#333" stroke-width="1.1"/><line x1="-5.45" y1="-10.69" x2="-6.95" y2="-13.63" stroke="#333" stroke-width="1.1"/><line x1="0.00" y1="-12.00" x2="0.00" y2="-15.30" stroke="#333" stroke-width="1.1"/><line x1="5.45" y1="-10.69" x2="6.95" y2="-13.63" stroke="#333" stroke-width="1.1"/><line x1="9.71" y1="-7.05" x2="12.38" y2="-8.99" stroke="#333" stroke-width="1.1"/><line x1="11.85" y1="-1.88" x2="15.11" y2="-2.39" stroke="#333" stroke-width="1.1"/><line x1="11.41" y1="3.71" x2="14.55" y2="4.73" stroke="#333" stroke-width="1.1"/><line x1="8.49" y1="8.49" x2="10.82" y2="10.82" stroke="#333" stroke-width="1.1"/><circle r="12.4" fill="url(#kg)" stroke="#b4b0a2" stroke-width="0.7"/><circle cx="-5.32" cy="5.14" r="2.5" fill="#d4d1c6"/><path d="M-7.09 6.91 A2.5 2.5 0 0 1 -3.56 3.37" fill="none" stroke="#9a9688" stroke-width="0.9"/><path d="M-3.56 3.37 A2.5 2.5 0 0 1 -7.09 6.91" fill="none" stroke="#f3f0e2" stroke-width="0.9"/></svg><div class="vb" style="left:658.8px;top:592.6px"><span>5</span></div><div class="lb" style="left:622.2px;top:625.2px">Decay (ms)</div><svg class="kn" style="left:618.8px;top:635.0px" width="36" height="36" viewBox="-18 -18 36 36"><line x1="-8.49" y1="8.49" x2="-10.82" y2="10.82" stroke="#333" stroke-width="1.1"/><line x1="-11.41" y1="3.71" x2="-14.55" y2="4.73" stroke="#333" stroke-width="1.1"/><line x1="-11.85" y1="-1.88" x2="-15.11" y2="-2.39" stroke="#333" stroke-width="1.1"/><line x1="-9.71" y1="-7.05" x2="-12.38" y2="-8.99" stroke="#333" stroke-width="1.1"/><line x1="-5.45" y1="-10.69" x2="-6.95" y2="-13.63" stroke="#333" stroke-width="1.1"/><line x1="0.00" y1="-12.00" x2="0.00" y2="-15.30" stroke="#333" stroke-width="1.1"/><line x1="5.45" y1="-10.69" x2="6.95" y2="-13.63" stroke="#333" stroke-width="1.1"/><line x1="9.71" y1="-7.05" x2="12.38" y2="-8.99" stroke="#333" stroke-width="1.1"/><line x1="11.85" y1="-1.88" x2="15.11" y2="-2.39" stroke="#333" stroke-width="1.1"/><line x1="11.41" y1="3.71" x2="14.55" y2="4.73" stroke="#333" stroke-width="1.1"/><line x1="8.49" y1="8.49" x2="10.82" y2="10.82" stroke="#333" stroke-width="1.1"/><circle r="12.4" fill="url(#kg)" stroke="#b4b0a2" stroke-width="0.7"/><circle cx="-7.15" cy="-1.92" r="2.5" fill="#d4d1c6"/><path d="M-8.92 -0.15 A2.5 2.5 0 0 1 -5.38 -3.68" fill="none" stroke="#9a9688" stroke-width="0.9"/><path d="M-5.38 -3.68 A2.5 2.5 0 0 1 -8.92 -0.15" fill="none" stroke="#f3f0e2" stroke-width="0.9"/></svg><div class="vb" style="left:658.8px;top:642.1px"><span>500</span></div><div class="pn" style="left:713.0px;top:450.4px;width:99.2px;height:75.2px"><div class="pi"><div class="ph"></div></div></div><div class="led" style="left:719.0px;top:457.0px"><i style="background:#000"></i></div><div class="pt" style="left:742.2px;top:457.5px;transform:scaleX(0.968)">Peak Limiter</div><div class="lb" style="left:727.7px;top:476.7px">Threshold (dBFS)</div><svg class="kn" style="left:724.3px;top:486.5px" width="36" height="36" viewBox="-18 -18 36 36"><line x1="-8.49" y1="8.49" x2="-10.82" y2="10.82" stroke="#333" stroke-width="1.1"/><line x1="-11.41" y1="3.71" x2="-14.55" y2="4.73" stroke="#333" stroke-width="1.1"/><line x1="-11.85" y1="-1.88" x2="-15.11" y2="-2.39" stroke="#333" stroke-width="1.1"/><line x1="-9.71" y1="-7.05" x2="-12.38" y2="-8.99" stroke="#333" stroke-width="1.1"/><line x1="-5.45" y1="-10.69" x2="-6.95" y2="-13.63" stroke="#333" stroke-width="1.1"/><line x1="0.00" y1="-12.00" x2="0.00" y2="-15.30" stroke="#333" stroke-width="1.1"/><line x1="5.45" y1="-10.69" x2="6.95" y2="-13.63" stroke="#333" stroke-width="1.1"/><line x1="9.71" y1="-7.05" x2="12.38" y2="-8.99" stroke="#333" stroke-width="1.1"/><line x1="11.85" y1="-1.88" x2="15.11" y2="-2.39" stroke="#333" stroke-width="1.1"/><line x1="11.41" y1="3.71" x2="14.55" y2="4.73" stroke="#333" stroke-width="1.1"/><line x1="8.49" y1="8.49" x2="10.82" y2="10.82" stroke="#333" stroke-width="1.1"/><circle r="12.4" fill="url(#kg)" stroke="#b4b0a2" stroke-width="0.7"/><circle cx="5.23" cy="5.23" r="2.5" fill="#d4d1c6"/><path d="M3.46 7.00 A2.5 2.5 0 0 1 7.00 3.46" fill="none" stroke="#9a9688" stroke-width="0.9"/><path d="M7.00 3.46 A2.5 2.5 0 0 1 3.46 7.00" fill="none" stroke="#f3f0e2" stroke-width="0.9"/></svg><div class="vb" style="left:764.3px;top:493.6px"><span>0</span></div><div class="pn" style="left:818.5px;top:450.4px;width:98.6px;height:136.2px"><div class="pi"><div class="ph"></div></div></div><div class="pt" style="left:824.0px;top:457.5px;transform:scaleX(0.965)">Fader</div><svg class="plot" style="left:0;top:0" width="936" height="733"><rect x="834" y="485" width="1.2" height="65.5" fill="#9a978c"/><rect x="835.2" y="485" width="1.2" height="65.5" fill="#c8c4b6"/><rect x="836.4" y="485" width="1" height="65.5" fill="#fbe4c0"/><line x1="826.5" y1="483.4" x2="831.5" y2="483.4" stroke="#222" stroke-width="1.1"/><line x1="840" y1="483.4" x2="845" y2="483.4" stroke="#222" stroke-width="1.1"/><line x1="826.5" y1="495.3" x2="831.5" y2="495.3" stroke="#000" stroke-width="1.6"/><line x1="840" y1="495.3" x2="845" y2="495.3" stroke="#000" stroke-width="1.6"/><line x1="826.5" y1="550.6" x2="831.5" y2="550.6" stroke="#9a9a9a" stroke-width="1.1"/><line x1="840" y1="550.6" x2="845" y2="550.6" stroke="#9a9a9a" stroke-width="1.1"/><path d="M830.2 490.2 Q830.2 486.9 833.4 486.6 L834.9 485.4 L836.3 485.4 L837.8 486.6 Q841 486.9 841 490.2 L841 501.5 Q841 504.4 838 504.4 L833.2 504.4 Q830.2 504.4 830.2 501.5 Z" fill="url(#tg)" stroke="#b4b0a2" stroke-width="0.6"/><rect x="832.8" y="494.4" width="5.8" height="1.8" fill="#111"/><rect x="905.8" y="478.2" width="4.4" height="5.2" fill="#000"/><rect x="905.8" y="484.2" width="4.4" height="5.2" fill="#000"/><rect x="905.8" y="490.2" width="4.4" height="5.2" fill="#000"/><rect x="905.8" y="496.2" width="4.4" height="5.2" fill="#000"/><rect x="905.8" y="502.2" width="4.4" height="5.2" fill="#000"/><rect x="905.8" y="508.2" width="4.4" height="5.2" fill="#000"/><rect x="905.8" y="514.2" width="4.4" height="5.2" fill="#000"/><rect x="905.8" y="520.2" width="4.4" height="5.2" fill="#000"/><rect x="905.8" y="526.2" width="4.4" height="5.2" fill="#000"/><rect x="905.8" y="532.2" width="4.4" height="5.2" fill="#000"/><rect x="905.8" y="538.2" width="4.4" height="5.2" fill="#000"/><rect x="905.8" y="544.2" width="4.4" height="5.2" fill="#000"/><rect x="905.8" y="531.4" width="4.4" height="0.8" fill="#555"/><rect x="905.8" y="537.4" width="4.4" height="0.8" fill="#555"/><rect x="905.8" y="543.4" width="4.4" height="0.8" fill="#555"/></svg><div class="fl" style="left:849.5px;top:476.3px">+20</div><div class="fl" style="left:854.4px;top:488.9px">0</div><div class="fl" style="left:848.8px;top:544.2px">-100</div><div class="fl" style="left:886.8px;top:477.4px">+20</div><div class="fl" style="left:889.4px;top:539.3px">-20</div><div class="vb" style="left:825px;top:562.8px;width:24.6px;line-height:15px"><span>0</span></div><div class="fl" style="left:853px;top:568px">dB</div><svg class="plot" style="left:817px;top:632px" width="12" height="20" viewBox="0 0 12 20"><path d="M0.5 0.8 L0.5 14.6 L3.6 11.6 L6.6 17.8 L8.8 16.8 L5.9 10.8 L10 10.8 Z" fill="#fff" stroke="#000" stroke-width="1" stroke-linejoin="miter"/></svg></body></html>
